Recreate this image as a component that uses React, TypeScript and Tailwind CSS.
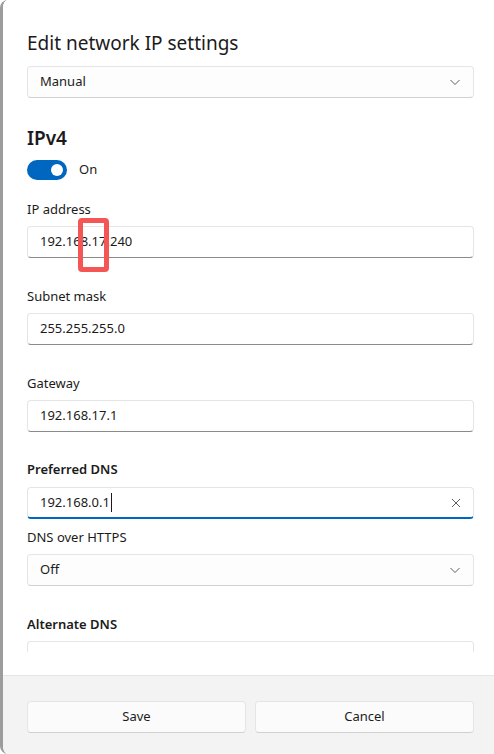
import React from "react"

const font = { fontFamily: '"Noto Sans", "Open Sans", sans-serif' }

function Chevron() {
    return (
        <svg width="12" height="12" viewBox="0 0 12 12" className="text-[#5f5f5f]">
            <polyline points="1.5,4 6,8.5 10.5,4" fill="none" stroke="currentColor" strokeWidth="1" />
        </svg>
    )
}

function Select({ value }: { value: string }) {
    return (
        <div className="h-[32px] rounded-[4px] border border-[#e5e5e5] border-b-[#d0d0d0] bg-[#fdfdfd] flex items-center pl-[12px] pr-[12px] justify-between">
            <span className="text-[13px] text-[#1b1b1b]">{value}</span>
            <Chevron />
        </div>
    )
}

function Field({ label, value, bold = false }: { label: string; value?: string; bold?: boolean }) {
    return (
        <div className="flex flex-col">
            <div className={`h-[20px] leading-[20px] text-[13px] text-[#1b1b1b] ${bold ? "font-semibold" : ""}`}>{label}</div>
            <div className="mt-[7px] h-[32px] rounded-[4px] border border-[#e5e5e5] border-b-[#8a8a8a] bg-white flex items-center pl-[12px]">
                <span className="text-[13px] text-[#1b1b1b]">{value}</span>
            </div>
        </div>
    )
}

export default function App() {
    return (
        <div className="relative w-[494px] h-[754px] bg-white overflow-hidden" style={font}>
            <div className="h-full flex flex-col rounded-l-[8px] border-l-[3px] border-[#9c9c9c] overflow-hidden">
                <div className="h-[675px] bg-white flex flex-col">
                    <div className="h-[652px] overflow-hidden pl-[24px] pr-[20px] pt-[29px]">
                        <h1 className="text-[19px] leading-[28px] text-[#1b1b1b]">Edit network IP settings</h1>
                        <div className="mt-[9px]">
                            <Select value="Manual" />
                        </div>

                        <h2 className="mt-[26px] text-[19px] leading-[28px] font-semibold text-[#1b1b1b]">IPv4</h2>
                        <div className="mt-[8px] flex items-center h-[20px]">
                            <div className="w-[40px] h-[20px] rounded-full bg-[#0067c0] flex items-center justify-end pr-[4px]">
                                <div className="w-[12px] h-[12px] rounded-full bg-white" />
                            </div>
                            <span className="ml-[12px] text-[13px] text-[#1b1b1b]">On</span>
                        </div>

                        <div className="mt-[19px] flex flex-col gap-[28px]">
                            <Field label="IP address" value="192.168.17.240" />
                            <Field label="Subnet mask" value="255.255.255.0" />
                            <Field label="Gateway" value="192.168.17.1" />
                        </div>

                        <div className="mt-[27px] flex flex-col">
                            <div className="h-[20px] leading-[20px] text-[13px] font-semibold text-[#1b1b1b]">Preferred DNS</div>
                            <div className="mt-[8px] h-[32px] rounded-[4px] border border-[#e5e5e5] border-b-2 border-b-[#0067c0] bg-white flex items-center pl-[12px] pr-[12px] justify-between">
                                <span className="flex items-center text-[13px] text-[#1b1b1b]">
                                    192.168.0.1
                                    <span className="ml-[1px] inline-block w-[1px] h-[19px] bg-[#1b1b1b]" />
                                </span>
                                <svg width="10" height="10" viewBox="0 0 10 10" className="text-[#5f5f5f]">
                                    <path d="M1 1 L9 9 M9 1 L1 9" stroke="currentColor" strokeWidth="1" />
                                </svg>
                            </div>
                            <div className="mt-[8px] h-[20px] leading-[20px] text-[13px] text-[#1b1b1b]">DNS over HTTPS</div>
                            <div className="mt-[7px]">
                                <Select value="Off" />
                            </div>
                        </div>

                        <div className="mt-[28px]">
                            <Field label="Alternate DNS" value="" bold />
                        </div>
                    </div>
                </div>
                <div className="flex-1 bg-[#f3f3f3] border-t border-[#e5e5e5] pl-[24px] pr-[20px] pt-[25px]">
                    <div className="grid grid-cols-2 gap-[9px]">
                        <button className="h-[32px] rounded-[4px] border border-[#e5e5e5] border-b-[#d0d0d0] bg-[#fbfbfb] text-[13px] text-[#1b1b1b]">Save</button>
                        <button className="h-[32px] rounded-[4px] border border-[#e5e5e5] border-b-[#d0d0d0] bg-[#fbfbfb] text-[13px] text-[#1b1b1b]">Cancel</button>
                    </div>
                </div>
            </div>

            {/* red annotation box */}
            <div className="absolute left-[78px] top-[218px] w-[31px] h-[54px] rounded-[4px] border-[5px] border-[#f45656]" />
        </div>
    )
}
